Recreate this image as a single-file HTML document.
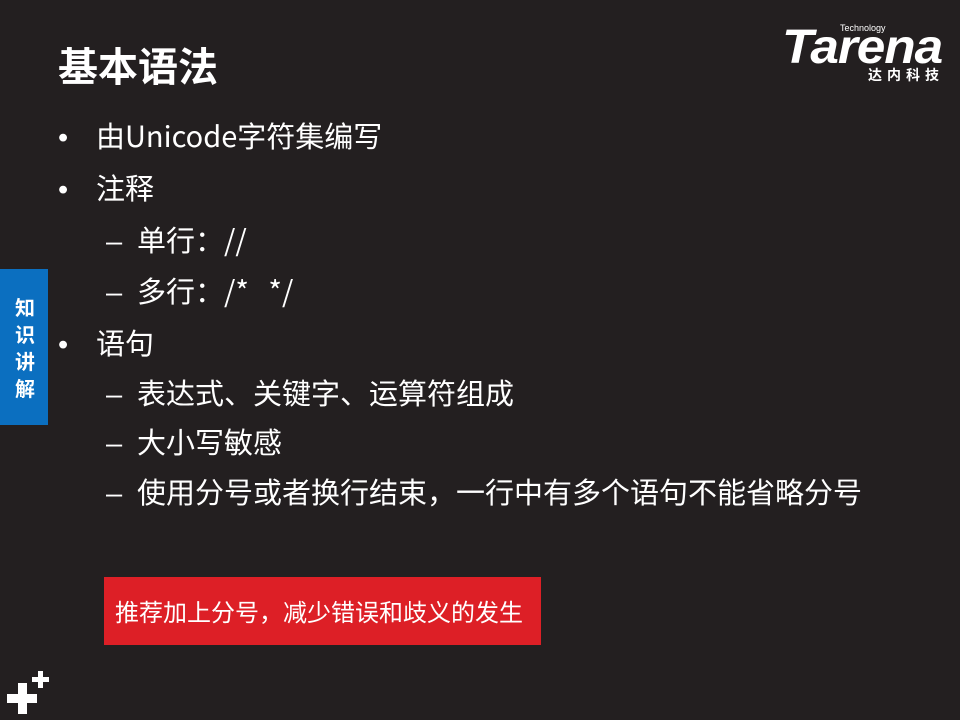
<!DOCTYPE html>
<html><head><meta charset="utf-8"><style>
body{margin:0;width:960px;height:720px;background:#231f20;position:relative;overflow:hidden;font-family:"Noto Sans CJK SC","Liberation Sans",sans-serif;color:#fff}
.a{position:absolute;white-space:nowrap}
.t{left:58px;top:36px;font-size:40px;font-weight:bold;line-height:56px}
.l{font-size:29px;line-height:36px;font-family:"Liberation Sans",sans-serif}
.l span{font-family:"Noto Sans CJK SC","Liberation Sans",sans-serif;top:-3px}
.b{left:58px}.b span{position:absolute;left:38px}
.s{left:106px}.s span{position:absolute;left:31px}
</style></head><body>
<div class="a t">基本语法</div>
<div class="a" style="left:782px;top:20px;width:165px;height:68px;font-family:'Liberation Sans','Noto Sans CJK SC',sans-serif">
<div class="a" style="left:58px;top:3px;font-size:9px">Technology</div>
<div class="a" style="left:0;top:3px;font-size:48px;font-weight:bold;font-style:italic;letter-spacing:-1px;line-height:50px;transform:scaleX(1.07);transform-origin:left">Tarena</div>
<div class="a" style="left:86px;top:45px;font-size:14px;font-weight:bold;letter-spacing:5px;font-family:'Noto Sans CJK SC',sans-serif">达内科技</div>
</div>
<div class="a l b" style="top:120px">•<span>由Unicode字符集编写</span></div>
<div class="a l b" style="top:172px">•<span>注释</span></div>
<div class="a l s" style="top:224px">–<span>单行：//</span></div>
<div class="a l s" style="top:275px">–<span>多行：/*&nbsp;&nbsp;&nbsp;*/</span></div>
<div class="a l b" style="top:327px">•<span>语句</span></div>
<div class="a l s" style="top:377px">–<span>表达式、关键字、运算符组成</span></div>
<div class="a l s" style="top:426px">–<span>大小写敏感</span></div>
<div class="a l s" style="top:476px">–<span>使用分号或者换行结束，一行中有多个语句不能省略分号</span></div>
<div class="a" style="left:104px;top:577px;width:437px;height:68px;background:#dd1f26"></div>
<div class="a" style="left:115px;top:594px;font-size:24px;line-height:34px">推荐加上分号，减少错误和歧义的发生</div>
<div class="a" style="left:0;top:269px;width:48px;height:156px;background:#0b6fc0"></div>
<div class="a" style="left:13px;top:293px;width:24px;font-size:20px;font-weight:bold;line-height:27px;white-space:normal;text-align:center">知识讲解</div>
<div class="a" style="left:7px;top:694px;width:30px;height:9px;background:#fff"></div>
<div class="a" style="left:18px;top:683px;width:9px;height:31px;background:#fff"></div>
<div class="a" style="left:32px;top:677px;width:17px;height:5px;background:#fff"></div>
<div class="a" style="left:38px;top:671px;width:5px;height:17px;background:#fff"></div>
</body></html>
